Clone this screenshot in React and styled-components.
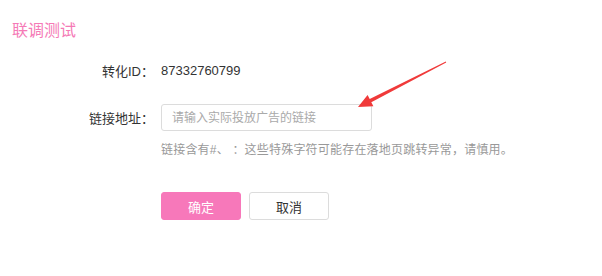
import styled, { createGlobalStyle } from "styled-components";

const GlobalStyle = createGlobalStyle`
  html, body {
    margin: 0;
    padding: 0;
    background: #fff;
    font-family: "Liberation Sans", "Noto Sans CJK SC", sans-serif;
  }
`;

const Page = styled.div`
  position: relative;
  width: 602px;
  height: 276px;
  box-sizing: border-box;
  padding: 21px 12px 0;
`;

const Title = styled.h3`
  margin: 0;
  font-size: 16px;
  line-height: 20px;
  font-weight: normal;
  color: #f57ab6;
`;

const Form = styled.div`
  margin-top: 16px;
  display: flex;
  flex-direction: column;
`;

const Row = styled.div`
  display: flex;
  align-items: center;
  margin-top: ${(p) => p.$gap || 0}px;
  min-height: 27px;
`;

const Label = styled.label`
  width: 142px;
  margin-right: 7px;
  text-align: right;
  font-size: 13px;
  color: #333;
`;

const Value = styled.span`
  font-size: 13px;
  color: #333;
`;

const Input = styled.input`
  width: 211px;
  height: 27px;
  box-sizing: border-box;
  border: 1px solid #dcdcdc;
  border-radius: 3px;
  padding: 0 10px;
  font-size: 12px;
  font-family: inherit;
  color: #333;
  outline: none;
  &::placeholder {
    color: #aaa;
  }
`;

const Hint = styled.div`
  margin: 10px 0 0 149px;
  font-size: 12px;
  line-height: 18px;
  letter-spacing: 0.2px;
  color: #999;
`;

const Actions = styled.div`
  display: flex;
  gap: 8px;
  margin: 33px 0 0 149px;
`;

const Button = styled.button`
  width: 80px;
  height: 28px;
  box-sizing: border-box;
  border-radius: 3px;
  font-size: 13px;
  font-family: inherit;
  cursor: pointer;
  border: 1px solid ${(p) => (p.$primary ? "#f778ba" : "#dcdcdc")};
  background: ${(p) => (p.$primary ? "#f778ba" : "#fff")};
  color: ${(p) => (p.$primary ? "#fff" : "#333")};
`;

const Arrow = styled.svg`
  position: absolute;
  left: 0;
  top: 0;
  pointer-events: none;
`;

export default function App() {
  return (
    <Page>
      <GlobalStyle />
      <Title>联调测试</Title>
      <Form>
        <Row>
          <Label>转化ID：</Label>
          <Value>87332760799</Value>
        </Row>
        <Row $gap={20}>
          <Label>链接地址：</Label>
          <Input placeholder="请输入实际投放广告的链接" />
        </Row>
        <Hint>链接含有#、 ：这些特殊字符可能存在落地页跳转异常，请慎用。</Hint>
        <Actions>
          <Button $primary>确定</Button>
          <Button>取消</Button>
        </Actions>
      </Form>
      <Arrow width="602" height="276" viewBox="0 0 602 276">
        <polygon
          points="446.2,62.4 371.3,102.2 373.4,106.2 358,107 367.6,95 369.7,99 445.8,61.6"
          fill="#f03a3a"
        />
      </Arrow>
    </Page>
  );
}
